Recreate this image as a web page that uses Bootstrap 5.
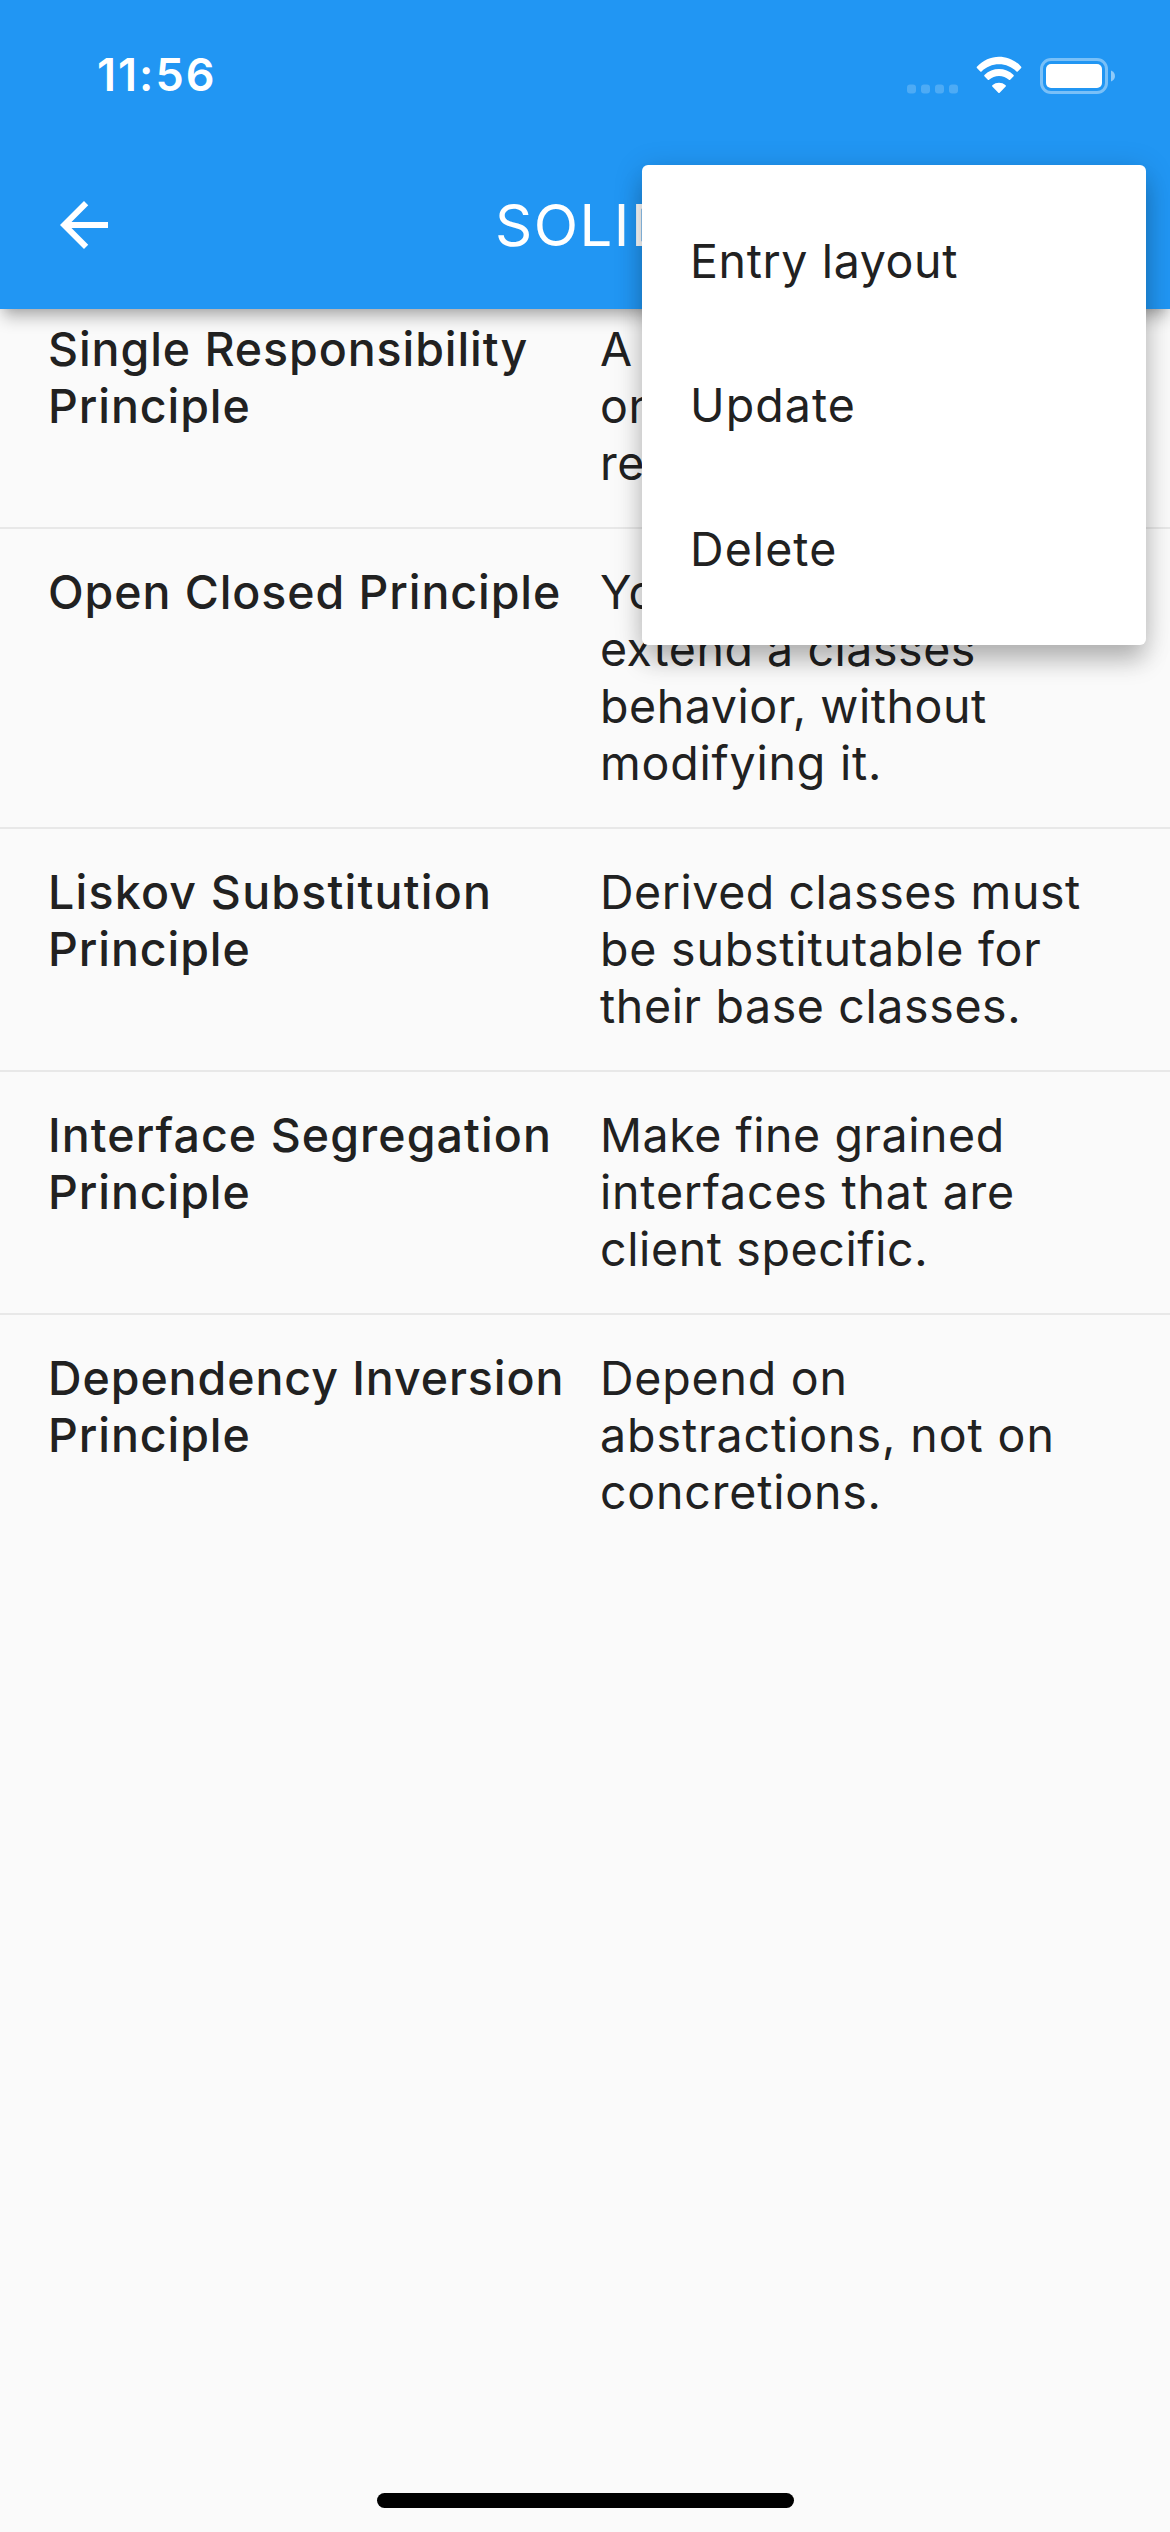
<!DOCTYPE html>
<html lang="en">
<head>
<meta charset="utf-8">
<meta name="viewport" content="width=device-width, initial-scale=1">
<title>SOLID</title>
<link href="https://cdn.jsdelivr.net/npm/bootstrap@5.3.0/dist/css/bootstrap.min.css" rel="stylesheet">
<script src="https://cdn.jsdelivr.net/npm/bootstrap@5.3.0/dist/js/bootstrap.bundle.min.js"></script>
<style>
  body { background: #fafafa; color: #212121; font-family: Inter, "Liberation Sans", sans-serif; font-size: 46.5px; line-height: 57px; }
  .screen { width: 1170px; height: 2532px; }
  .top-area { background: #2196f3; height: 309px; z-index: 2; }
  /* elevation shadow under the bar, faded at both screen edges */
  .top-area::after { content: ""; position: absolute; z-index: -2; left: 0; right: 0; bottom: 0; height: 60px; box-shadow: 0 12px 15px -3px rgba(0,0,0,.24), 0 3px 12px -5px rgba(0,0,0,.24); }
  .top-area::before { content: ""; position: absolute; z-index: -1; inset: 0; background: #2196f3; }
  .status { height: 141px; padding: 8px 55px 0 97px; }
  .clock { font-size: 45px; font-weight: 600; letter-spacing: 2px; }
  .app-row { height: 168px; padding-left: 48px; }
  .app-title { font-size: 58px; line-height: 72px; font-weight: 400; letter-spacing: 1.5px; padding-left: 375px; }
  .entries { margin-top: -23px; z-index: 1; }
  .entry { padding: 35px 0 35px 48px; border-bottom: 2px solid #e8e8e8; min-height: 243px; }
  .entry.four { min-height: 300px; }
  .entry:last-child { border-bottom: 0; }
  .term { width: 552px; font-weight: 500; }
  .line { display: block; white-space: nowrap; letter-spacing: .55px; }
  .sp-6 { letter-spacing: .62px; }
  .sp-8 { letter-spacing: .8px; }
  .sp-9 { letter-spacing: .92px; }
  .sp-11 { letter-spacing: 1.08px; }
  .sp-12 { letter-spacing: 1.22px; }
  .popup { left: 642px; top: 165px; width: 504px; height: 480px; padding: 24px 0; background: #fff; border-radius: 6px; z-index: 5;
    box-shadow: 0 18px 24px -2px rgba(0,0,0,.22), 0 4px 30px rgba(0,0,0,.15); }
  .popup-item { height: 144px; padding-left: 48px; }
  .home-bar { width: 417px; height: 15px; border-radius: 8px; background: #000; margin-bottom: 24px; }
</style>
</head>
<body>
<div class="screen position-relative overflow-hidden d-flex flex-column">
  <header class="top-area position-relative text-white flex-shrink-0">
    <div class="status d-flex align-items-center justify-content-between">
      <span class="clock">11:56</span>
      <svg width="210" height="40" viewBox="0 0 210 40" fill="#fff">
        <g fill-opacity=".2"><rect x="2" y="29.5" width="9" height="9" rx="3"/><rect x="16" y="29.5" width="9" height="9" rx="3"/><rect x="30" y="29.5" width="9" height="9" rx="3"/><rect x="44" y="29.5" width="9" height="9" rx="3"/></g>
        <path d="M94 10.1c6.7 0 12.9 2.6 17.500 7.200.35.35.9.35 1.250 0l3.400-3.500c.36-.37.36-.96 0-1.320C103.900-.9 84.100-.9 71.900 12.480c-.36.36-.36.950 0 1.320l3.400 3.500c.35.35.9.35 1.250 0C81.100 12.700 87.300 10.100 94 10.100z" transform="translate(0 -.8)"/>
        <path d="M94 22.300c3.700 0 7.200 1.300 9.900 3.800.37.34.94.33 1.300-.02l3.400-3.500c.37-.37.36-.97-.02-1.330-8.200-7.800-20.960-7.800-29.160 0-.38.36-.39.960-.02 1.330l3.400 3.500c.36.35.930.36 1.300.02 2.700-2.500 6.200-3.800 9.900-3.800z" transform="translate(0 -1.300)"/>
        <path d="M100.700 29.300c.38-.38.36-.98-.04-1.340-3.850-3.270-9.470-3.270-13.320 0-.4.360-.42.960-.04 1.340l6.040 6.160c.36.37.96.37 1.320 0z" transform="translate(0 2.200)"/>
        <rect x="136.500" y="4.500" width="65" height="33" rx="9.500" fill="none" stroke="#fff" stroke-width="3" stroke-opacity=".4"/>
        <rect x="141" y="9" width="56" height="24" rx="5"/>
        <path d="M206 15.500c5.300 2 5.300 9 0 11z" fill-opacity=".5"/>
      </svg>
    </div>
    <div class="app-row d-flex align-items-center">
      <svg width="72" height="72" viewBox="0 0 24 24" fill="#fff"><path d="M20 11H7.830l5.590-5.590L12 4l-8 8 8 8 1.410-1.410L7.830 13H20v-2z"/></svg>
      <h1 class="app-title mb-0">SOLID</h1>
    </div>
  </header>

  <main class="entries position-relative flex-grow-1">
    <div class="entry d-flex">
      <div class="term"><span class="line sp-9">Single Responsibility</span><span class="line sp-9">Principle</span></div>
      <div><span class="line">A class should have</span><span class="line">one, and only one,</span><span class="line">reason to change.</span></div>
    </div>
    <div class="entry four d-flex">
      <div class="term"><span class="line sp-9">Open Closed Principle</span></div>
      <div><span class="line">You should be able to</span><span class="line">extend a classes</span><span class="line">behavior, without</span><span class="line sp-8">modifying it.</span></div>
    </div>
    <div class="entry d-flex">
      <div class="term"><span class="line sp-12">Liskov Substitution</span><span class="line sp-9">Principle</span></div>
      <div><span class="line">Derived classes must</span><span class="line sp-8">be substitutable for</span><span class="line sp-6">their base classes.</span></div>
    </div>
    <div class="entry d-flex">
      <div class="term"><span class="line sp-11">Interface Segregation</span><span class="line sp-9">Principle</span></div>
      <div><span class="line">Make fine grained</span><span class="line sp-8">interfaces that are</span><span class="line sp-6">client specific.</span></div>
    </div>
    <div class="entry d-flex">
      <div class="term"><span class="line sp-9">Dependency Inversion</span><span class="line sp-9">Principle</span></div>
      <div><span class="line sp-8">Depend on</span><span class="line sp-9">abstractions, not on</span><span class="line sp-8">concretions.</span></div>
    </div>
  </main>

  <footer class="d-flex justify-content-center"><div class="home-bar"></div></footer>

  <div class="popup position-absolute">
    <div class="popup-item d-flex align-items-center"><span class="line sp-6">Entry layout</span></div>
    <div class="popup-item d-flex align-items-center"><span class="line sp-11">Update</span></div>
    <div class="popup-item d-flex align-items-center"><span class="line sp-11">Delete</span></div>
  </div>
</div>
</body>
</html>
